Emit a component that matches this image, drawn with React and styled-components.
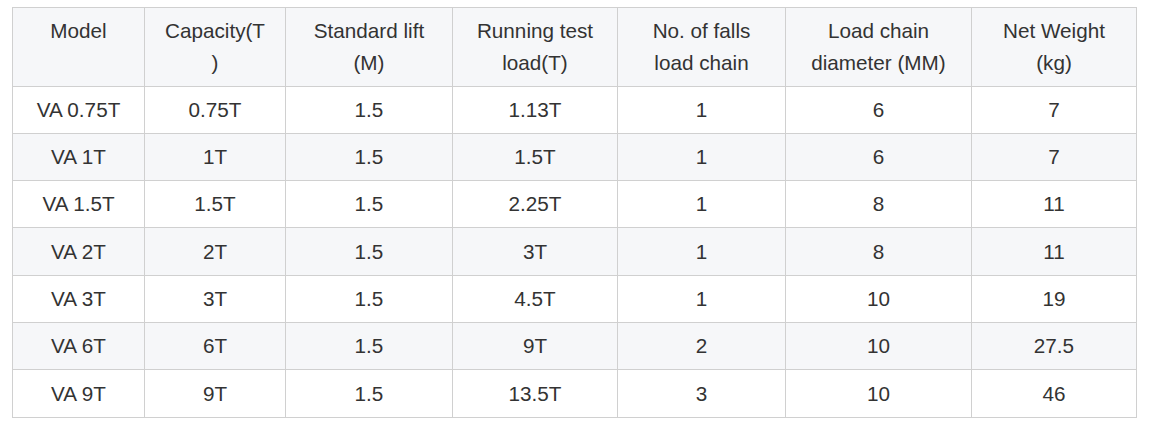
import React from "react";
import styled, { createGlobalStyle } from "styled-components";

const Global = createGlobalStyle`
  html, body { margin: 0; padding: 0; background: #ffffff; }
  body { font-family: "Liberation Sans", Arial, sans-serif; color: #333333; }
`;

const Page = styled.div`
  padding: 7px 0 0 12px;
`;

const Table = styled.table`
  border-collapse: collapse;
  table-layout: fixed;
  width: 1124px;
  font-size: 20.7px;
  line-height: 31.3px;
`;

const HeadCell = styled.th`
  font-weight: normal;
  background: #f6f7f9;
  border: 1px solid #d0d0d0;
  padding: 7.3px 16px 7.7px;
  text-align: center;
  vertical-align: top;
  color: #333333;
`;

const Row = styled.tr`
  background: ${(p) => (p.$striped ? "#f6f7f9" : "#ffffff")};
`;

const Cell = styled.td`
  border: 1px solid #d0d0d0;
  padding: 7.3px 16px 7.7px;
  text-align: center;
  vertical-align: top;
  color: #333333;
`;

const widths = [132, 141, 167, 165, 168, 186, 165];

const headers = [
  "Model",
  "Capacity(T )",
  "Standard lift (M)",
  "Running test load(T)",
  "No. of falls load chain",
  "Load chain diameter (MM)",
  "Net Weight (kg)",
];

const rows = [
  ["VA 0.75T", "0.75T", "1.5", "1.13T", "1", "6", "7"],
  ["VA 1T", "1T", "1.5", "1.5T", "1", "6", "7"],
  ["VA 1.5T", "1.5T", "1.5", "2.25T", "1", "8", "11"],
  ["VA 2T", "2T", "1.5", "3T", "1", "8", "11"],
  ["VA 3T", "3T", "1.5", "4.5T", "1", "10", "19"],
  ["VA 6T", "6T", "1.5", "9T", "2", "10", "27.5"],
  ["VA 9T", "9T", "1.5", "13.5T", "3", "10", "46"],
];

const CapHead = () => (
  <>
    Capacity(T
    <br />)
  </>
);

export default function App() {
  return (
    <>
      <Global />
      <Page>
        <Table>
          <colgroup>
            {widths.map((w, i) => (
              <col key={i} style={{ width: w }} />
            ))}
          </colgroup>
          <thead>
            <tr>
              {headers.map((h, i) => (
                <HeadCell key={i}>{i === 1 ? <CapHead /> : h}</HeadCell>
              ))}
            </tr>
          </thead>
          <tbody>
            {rows.map((r, i) => (
              <Row key={i} $striped={i % 2 === 1}>
                {r.map((c, j) => (
                  <Cell key={j}>{c}</Cell>
                ))}
              </Row>
            ))}
          </tbody>
        </Table>
      </Page>
    </>
  );
}
